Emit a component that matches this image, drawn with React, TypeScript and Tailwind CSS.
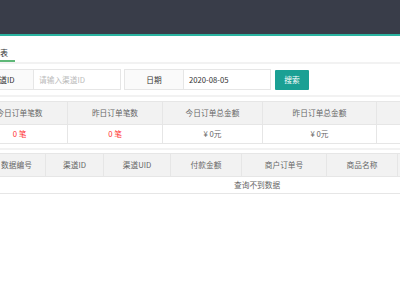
import { FC } from "react"

const statHeads = ["今日订单笔数", "昨日订单笔数", "今日订单总金额", "昨日订单总金额", ""]
const statVals = ["0 笔", "0 笔", "¥ 0元", "¥ 0元", ""]
const statWidths = ["w-[96px]", "w-[95px]", "w-[100px]", "w-[114px]", "w-[80px]"]

const cols = ["数据编号", "渠道ID", "渠道UID", "付款金额", "商户订单号", "商品名称", "状态"]
const colWidths = ["w-[74px] pl-[16px]", "w-[58px]", "w-[67px]", "w-[71px]", "w-[85px]", "w-[71px]", "w-[70px]"]

const App: FC = () => {
  return (
    <div className="w-[400px] h-[300px] overflow-hidden bg-white text-[7.7px] text-[#666] font-['Noto_Sans_CJK_SC','Noto_Sans',sans-serif]">
      <div className="h-[34px] bg-[#393D49] border-b-2 border-[#2bb3a0] box-content" />
      <div className="ml-[-28px] w-[500px]">
        {/* tab */}
        <div className="h-[28px] flex items-end border-b-2 border-[#f2f2f2]">
          <div className="ml-[13px] w-[30px] h-[27px] pt-[12px] flex justify-center border-b-2 border-[#5FB878] text-[#333] text-[8px]">
            列表
          </div>
        </div>

        {/* search */}
        <div className="mt-[5px] flex items-center h-[21px]">
          <div className="w-[62px] h-[21px] flex items-center justify-center bg-[#fafafa] border border-[#e6e6e6] text-[#333]">
            渠道ID
          </div>
          <div className="w-[87px] h-[21px] flex items-center pl-[5px] border border-l-0 border-[#e6e6e6] text-[#bbb]">
            请输入渠道ID
          </div>
          <div className="ml-[3px] w-[60px] h-[21px] flex items-center justify-center bg-[#fafafa] border border-[#e6e6e6] text-[#333]">
            日期
          </div>
          <div className="w-[87px] h-[21px] flex items-center pl-[5px] border border-l-0 border-[#e6e6e6] text-[#333]">
            2020-08-05
          </div>
          <div className="ml-[4px] w-[34px] h-[20px] flex items-center justify-center bg-[#1aa094] text-white rounded-[1px]">
            搜索
          </div>
        </div>

        <div className="mt-[5px] h-[2px] bg-[#f2f2f2]" />

        {/* stats table */}
        <div className="mt-[4px] border-t border-[#e6e6e6]">
          <div className="flex h-[23px] bg-[#f2f2f2] border-b border-[#e6e6e6]">
            {statHeads.map((h, i) => (
              <div key={i} className={`${statWidths[i]} shrink-0 flex items-center justify-center border-r border-[#e6e6e6]`}>
                {h}
              </div>
            ))}
          </div>
          <div className="flex h-[19px] border-b border-[#e6e6e6]">
            {statVals.map((v, i) => (
              <div
                key={i}
                className={`${statWidths[i]} shrink-0 flex items-center justify-center border-r border-[#e6e6e6] ${i < 2 ? "text-[#f33]" : ""}`}
              >
                {v}
              </div>
            ))}
          </div>
        </div>

        <div className="mt-[4px] h-[2px] bg-[#f2f2f2]" />

        {/* data table */}
        <div className="mt-[3px] border-t border-[#e6e6e6]">
          <div className="flex h-[23px] bg-[#f2f2f2] border-b border-[#e6e6e6]">
            {cols.map((c, i) => (
              <div key={i} className={`${colWidths[i]} shrink-0 flex items-center justify-center border-r border-[#e6e6e6]`}>
                {c}
              </div>
            ))}
          </div>
          <div className="h-[17px] flex items-center border-b border-[#e6e6e6]">
            <div className="ml-[262px] text-[#666]">查询不到数据</div>
          </div>
        </div>
      </div>
    </div>
  )
}

export default App
